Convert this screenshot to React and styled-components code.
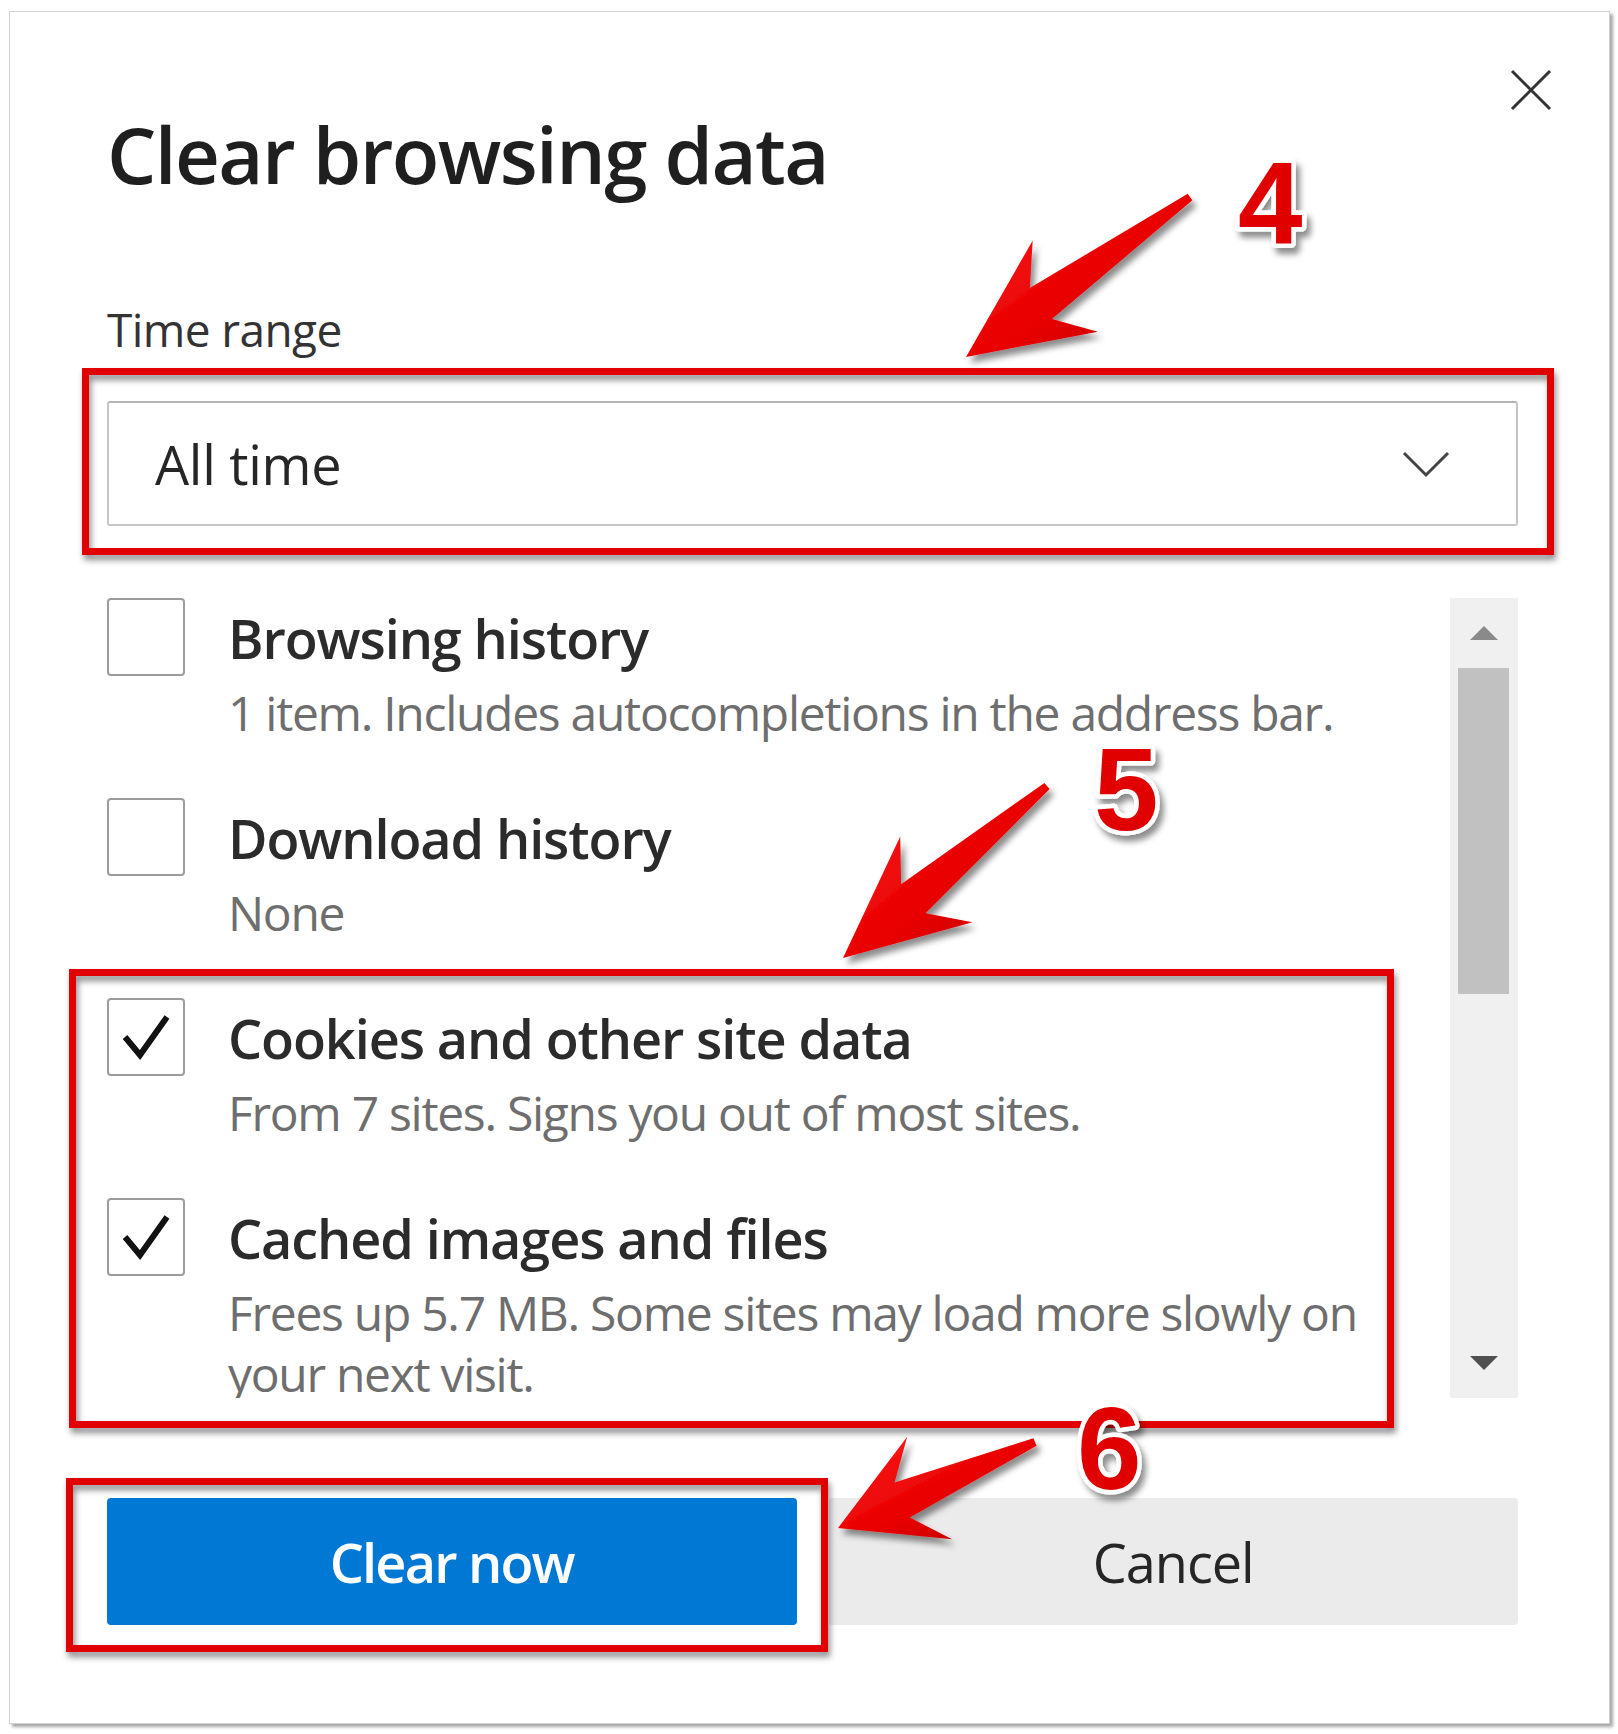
import React from 'react';
import styled, { createGlobalStyle } from 'styled-components';

const GlobalStyle = createGlobalStyle`
  html, body {
    margin: 0;
    padding: 0;
    background: #ffffff;
  }
  body {
    font-family: "Open Sans", "Noto Sans", sans-serif;
  }
`;

const items = [
    { title: 'Browsing history', desc: '1 item. Includes autocompletions in the address bar.', checked: false },
    { title: 'Download history', desc: 'None', checked: false },
    { title: 'Cookies and other site data', desc: 'From 7 sites. Signs you out of most sites.', checked: true },
    { title: 'Cached images and files', desc: 'Frees up 5.7 MB. Some sites may load more slowly on your next visit.', checked: true },
];

// annotation boxes, page coordinates
const highlights = [
    { x: 82, y: 368, w: 1472, h: 187 },
    { x: 69, y: 969, w: 1325, h: 459 },
    { x: 66, y: 1478, w: 762, h: 174 },
];

const arrows = [
    { tail: [1190, 197], tip: [966, 357], head: 122, label: '4', lx: 1238, ly: 243 },
    { tail: [1047, 786], tip: [843, 958], head: 122, label: '5', lx: 1094, ly: 830 },
    { tail: [1035, 1442], tip: [838, 1528], head: 100, label: '6', lx: 1077, ly: 1489 },
];

const arrowPoints = ([tx, ty], [hx, hy], headLen) => {
    const dx = hx - tx;
    const dy = hy - ty;
    const len = Math.hypot(dx, dy);
    const ux = dx / len;
    const uy = dy / len;
    const nx = -uy;
    const ny = ux;
    const headHalf = 56;
    const shaftHalf = 19;
    const tailHalf = 4;
    const bx = hx - ux * headLen;
    const by = hy - uy * headLen;
    const jx = hx - ux * (headLen - 30);
    const jy = hy - uy * (headLen - 30);
    const pts = [
        [tx + nx * tailHalf, ty + ny * tailHalf],
        [jx + nx * shaftHalf, jy + ny * shaftHalf],
        [bx + nx * headHalf, by + ny * headHalf],
        [hx, hy],
        [bx - nx * headHalf, by - ny * headHalf],
        [jx - nx * shaftHalf, jy - ny * shaftHalf],
        [tx - nx * tailHalf, ty - ny * tailHalf],
    ];
    return pts.map(p => p.map(v => v.toFixed(1)).join(',')).join(' ');
};

const App = () => {
    return (
        <>
            <GlobalStyle />
            <Page>
                <Dialog>
                    <Header>
                        <Title>Clear browsing data</Title>
                        <CloseButton aria-label="Close">
                            <svg width="42" height="42" viewBox="0 0 42 42">
                                <path d="M2 2 L40 40 M40 2 L2 40" stroke="#333" strokeWidth="3" fill="none" />
                            </svg>
                        </CloseButton>
                    </Header>

                    <FieldLabel>Time range</FieldLabel>
                    <Select>
                        <span>All time</span>
                        <svg width="48" height="28" viewBox="0 0 48 28">
                            <path d="M2 3 L24 25 L46 3" stroke="#444" strokeWidth="3" fill="none" />
                        </svg>
                    </Select>

                    <ScrollArea>
                        <ItemList>
                            {items.map(item => (
                                <Row key={item.title}>
                                    <Checkbox>
                                        {item.checked && (
                                            <svg width="74" height="74" viewBox="0 0 74 74">
                                                <path d="M16 37 L31 55 L58 17" stroke="#111" strokeWidth="6" fill="none" />
                                            </svg>
                                        )}
                                    </Checkbox>
                                    <ItemText>
                                        <ItemTitle>{item.title}</ItemTitle>
                                        <ItemDesc>{item.desc}</ItemDesc>
                                    </ItemText>
                                </Row>
                            ))}
                        </ItemList>
                        <Scrollbar>
                            <ScrollButton>
                                <svg width="30" height="16" viewBox="0 0 30 16">
                                    <polygon points="15,1 29,15 1,15" fill="#8a8a8a" />
                                </svg>
                            </ScrollButton>
                            <Thumb />
                            <ScrollButton $bottom>
                                <svg width="30" height="16" viewBox="0 0 30 16">
                                    <polygon points="1,1 29,1 15,15" fill="#505050" />
                                </svg>
                            </ScrollButton>
                        </Scrollbar>
                    </ScrollArea>

                    <ButtonRow>
                        <Button $primary>Clear now</Button>
                        <Button>Cancel</Button>
                    </ButtonRow>
                </Dialog>

                {highlights.map((h, i) => (
                    <Highlight key={i} $x={h.x} $y={h.y} $w={h.w} $h={h.h} />
                ))}

                <Annotations width="1618" height="1734" viewBox="0 0 1618 1734">
                    <defs>
                        <linearGradient id="arrowFill" x1="0" y1="0" x2="1" y2="1">
                            <stop offset="0" stopColor="#ff1f1f" />
                            <stop offset="0.55" stopColor="#e80000" />
                            <stop offset="1" stopColor="#b80000" />
                        </linearGradient>
                        <filter id="dropShadow" x="-20%" y="-20%" width="140%" height="140%">
                            <feDropShadow dx="4" dy="6" stdDeviation="3" floodColor="#000" floodOpacity="0.45" />
                        </filter>
                    </defs>
                    {arrows.map(a => (
                        <g key={a.label}>
                            <polygon
                                points={arrowPoints(a.tail, a.tip, a.head)}
                                fill="url(#arrowFill)"
                                filter="url(#dropShadow)"
                            />
                            <StepNumber x={a.lx} y={a.ly} filter="url(#dropShadow)">{a.label}</StepNumber>
                        </g>
                    ))}
                </Annotations>
            </Page>
        </>
    );
};

const Page = styled.div`
    position: relative;
    width: 1618px;
    height: 1734px;
    padding: 11px 0 0 9px;
    box-sizing: border-box;
    overflow: hidden;
`;

const Dialog = styled.div`
    width: 1601px;
    height: 1713px;
    box-sizing: border-box;
    border: 1px solid #d2d2d2;
    box-shadow: 3px 3px 3px rgba(0, 0, 0, 0.35);
    background: #ffffff;
    padding: 57px 91px 0 97px;
    display: flex;
    flex-direction: column;
`;

const Header = styled.div`
    display: flex;
    justify-content: space-between;
    align-items: flex-start;
`;

const Title = styled.h1`
    margin: 37px 0 0;
    font-size: 78px;
    line-height: 96px;
    font-weight: 600;
    letter-spacing: -1.6px;
    color: #1f1f1f;
`;

const CloseButton = styled.button`
    width: 42px;
    height: 42px;
    margin-right: -34px;
    padding: 0;
    border: 0;
    background: none;
    display: flex;
`;

const FieldLabel = styled.div`
    margin-top: 99px;
    font-size: 46px;
    line-height: 56px;
    letter-spacing: -0.6px;
    color: #333333;
`;

const Select = styled.div`
    margin-top: 44px;
    height: 125px;
    box-sizing: border-box;
    border: 2px solid #c6c6c6;
    border-top-color: #b4b4b4;
    border-radius: 3px;
    padding: 0 66px 0 46px;
    display: flex;
    align-items: center;
    justify-content: space-between;
    font-size: 54px;
    letter-spacing: -0.3px;
    color: #262626;
`;

const ScrollArea = styled.div`
    margin-top: 72px;
    height: 800px;
    display: flex;
    gap: 18px;
`;

const ItemList = styled.div`
    flex: 1;
    overflow: hidden;
    display: flex;
    flex-direction: column;
    gap: 55px;
`;

const Row = styled.div`
    flex-shrink: 0;
    display: flex;
    align-items: flex-start;
    gap: 43px;
`;

const Checkbox = styled.div`
    flex-shrink: 0;
    width: 78px;
    height: 78px;
    box-sizing: border-box;
    border: 2px solid #9c9c9c;
    border-radius: 4px;
    display: flex;
    align-items: center;
    justify-content: center;
`;

const ItemText = styled.div`
    display: flex;
    flex-direction: column;
`;

const ItemTitle = styled.div`
    font-size: 54px;
    line-height: 80px;
    font-weight: 600;
    letter-spacing: -1.1px;
    color: #2b2b2b;
`;

const ItemDesc = styled.div`
    margin-top: 4px;
    font-size: 48px;
    line-height: 61px;
    letter-spacing: -1.3px;
    color: #6e6e6e;
`;

const Scrollbar = styled.div`
    width: 68px;
    flex-shrink: 0;
    background: #f0f0f0;
    display: flex;
    flex-direction: column;
`;

const ScrollButton = styled.div`
    height: 70px;
    margin-top: ${p => (p.$bottom ? 'auto' : '0')};
    display: flex;
    align-items: center;
    justify-content: center;
`;

const Thumb = styled.div`
    height: 326px;
    margin: 0 9px 0 8px;
    background: #c1c1c1;
`;

const ButtonRow = styled.div`
    margin-top: 100px;
    height: 127px;
    display: grid;
    grid-template-columns: 1fr 1fr;
    gap: 32px;
`;

const Button = styled.button`
    border: 0;
    border-radius: 4px;
    font-family: "Open Sans", "Noto Sans", sans-serif;
    font-size: 54px;
    font-weight: ${p => (p.$primary ? 600 : 400)};
    letter-spacing: ${p => (p.$primary ? '-1.8px' : '-1px')};
    background: ${p => (p.$primary ? '#0078d4' : '#ebebeb')};
    color: ${p => (p.$primary ? '#ffffff' : '#262626')};
`;

const Highlight = styled.div`
    position: absolute;
    left: ${p => p.$x}px;
    top: ${p => p.$y}px;
    width: ${p => p.$w}px;
    height: ${p => p.$h}px;
    box-sizing: border-box;
    border: 7px solid #e00000;
    filter: drop-shadow(2px 5px 3px rgba(0, 0, 0, 0.45));
    pointer-events: none;
`;

const Annotations = styled.svg`
    position: absolute;
    left: 0;
    top: 0;
    pointer-events: none;
`;

const StepNumber = styled.text`
    font-family: "Liberation Sans", Arial, sans-serif;
    font-weight: 700;
    font-size: 116px;
    fill: #e00000;
    stroke: #ffffff;
    stroke-width: 9px;
    paint-order: stroke;
    stroke-linejoin: round;
`;

export default App;
